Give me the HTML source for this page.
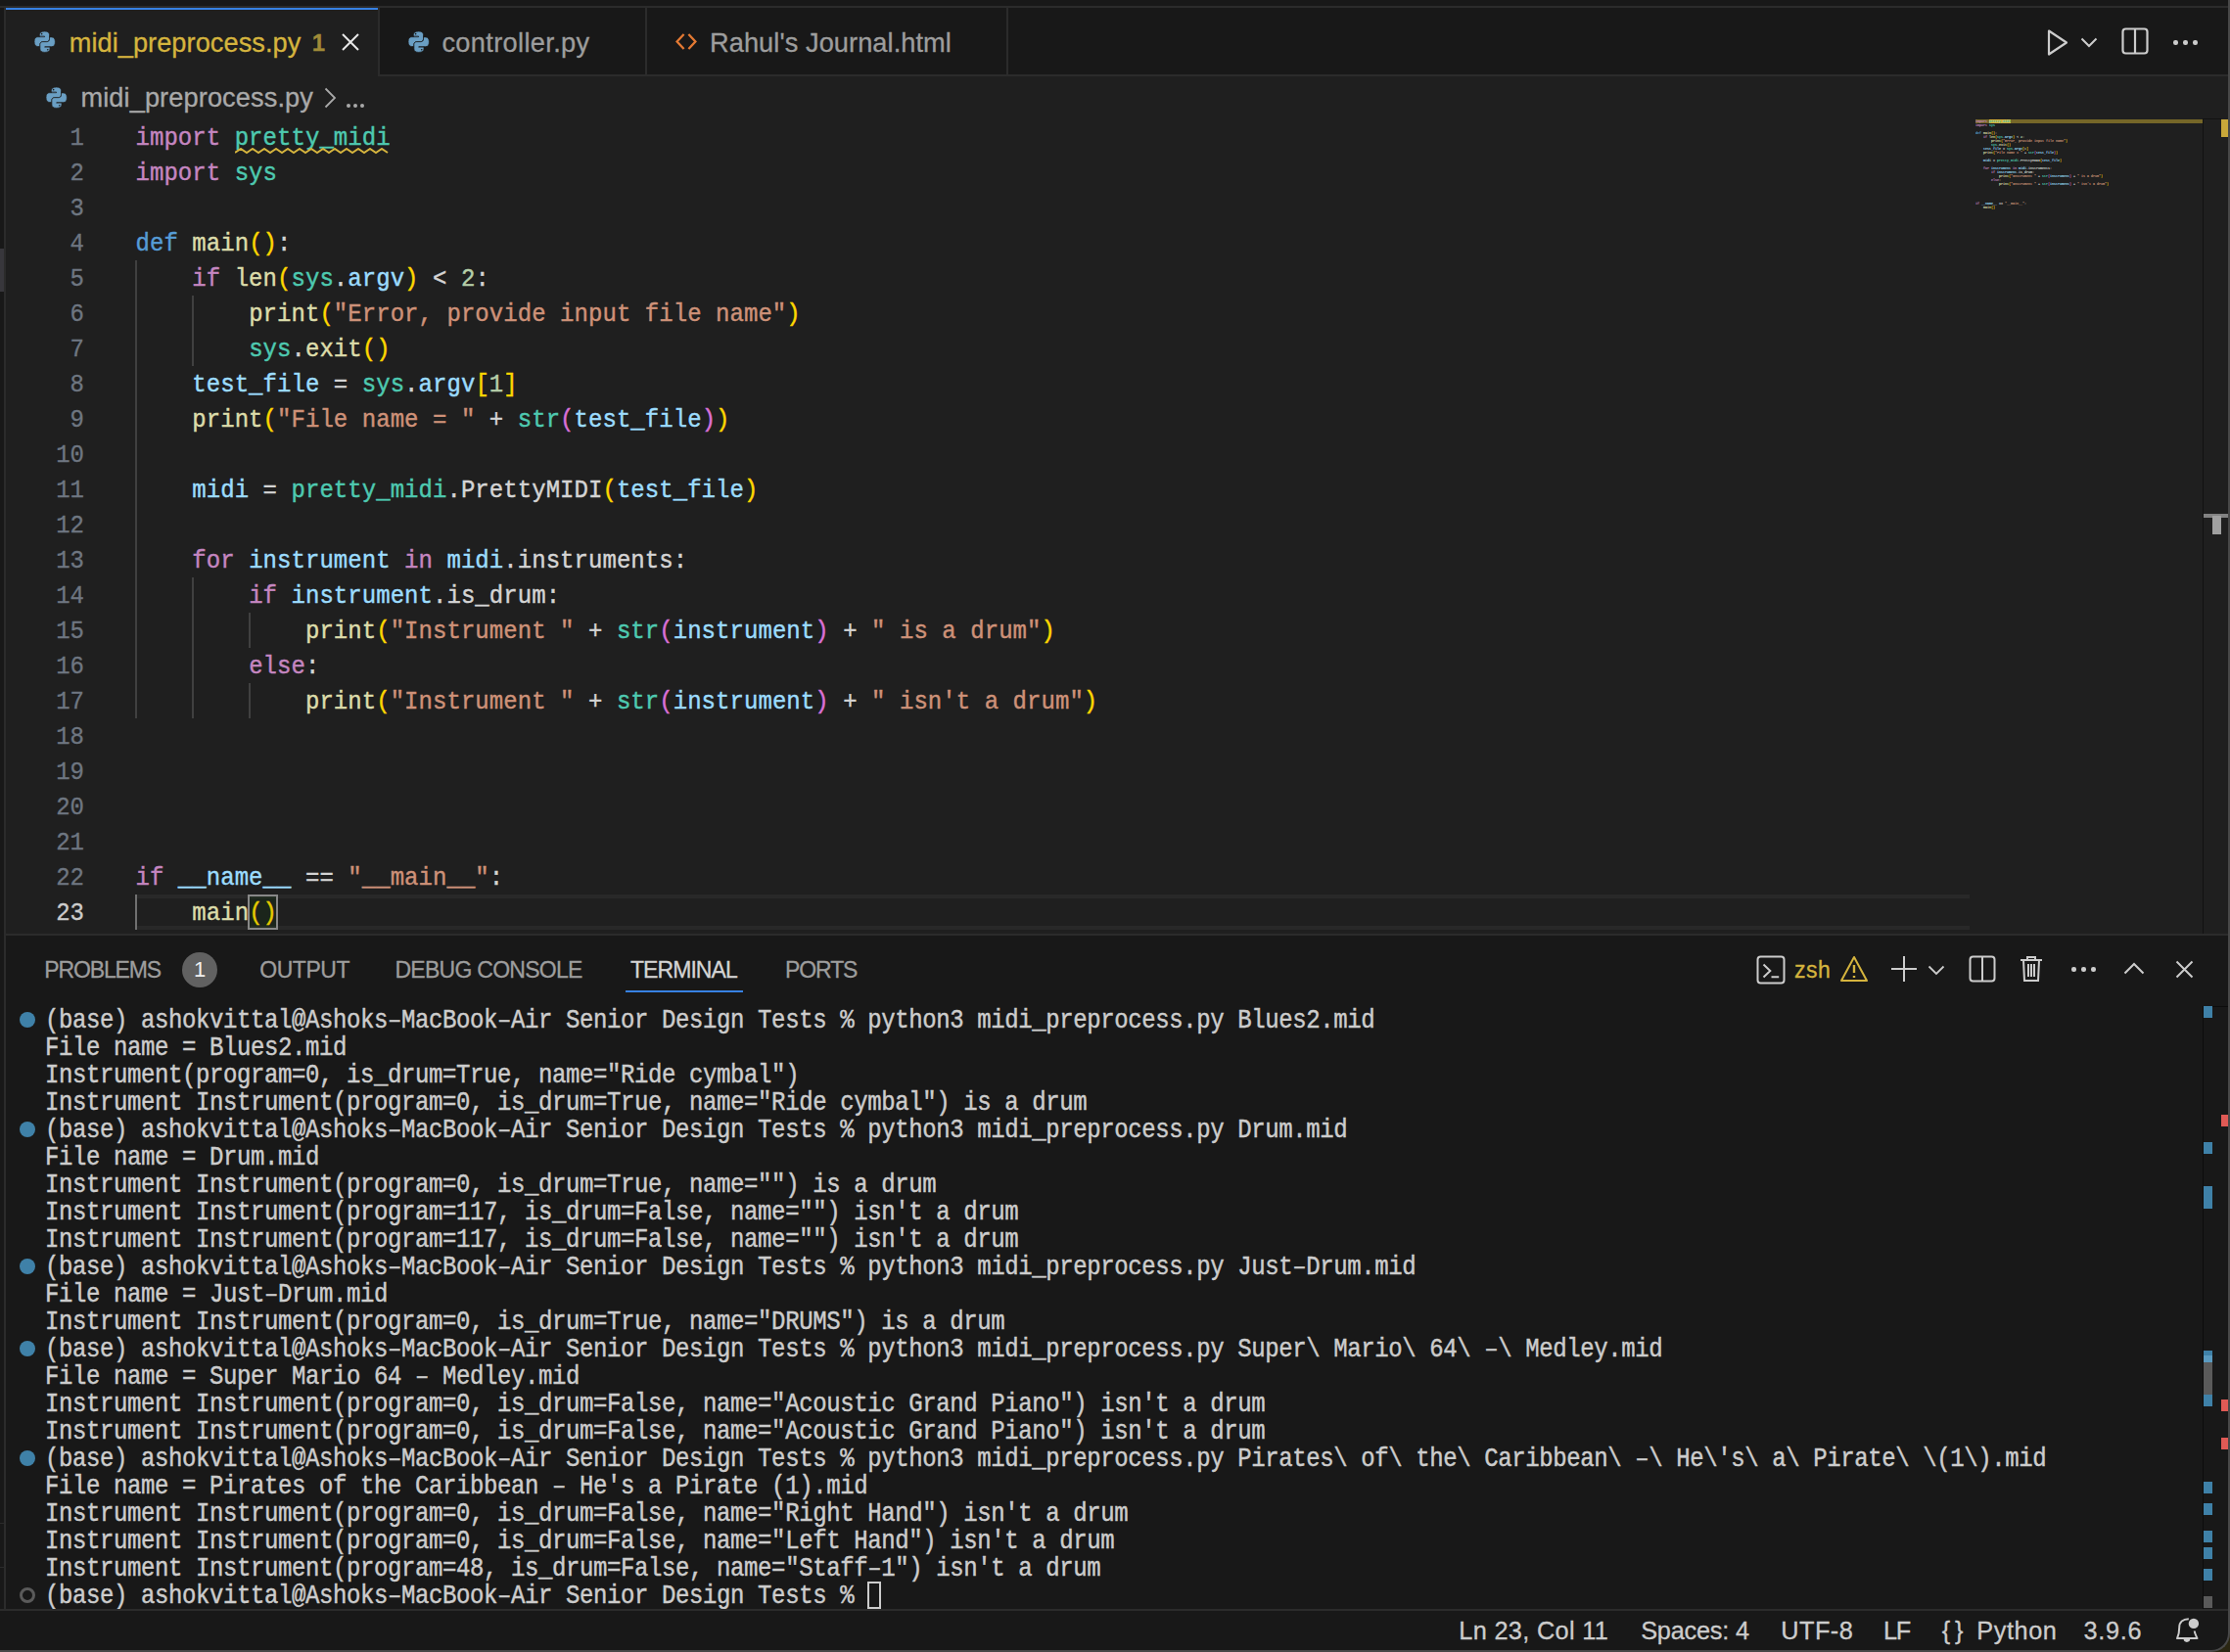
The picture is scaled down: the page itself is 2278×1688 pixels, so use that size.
<!DOCTYPE html><html><head><meta charset="utf-8"><style>
*{margin:0;padding:0;box-sizing:border-box}
html,body{width:2278px;height:1688px;overflow:hidden;background:#181818}
body{position:relative;font-family:"Liberation Sans",sans-serif}
.a{position:absolute}
.mono{font-family:"Liberation Mono",monospace;white-space:pre}
.cl{position:absolute;left:138.5px;height:36px;line-height:36px;transform:translateY(2px) scaleY(1.11);transform-origin:0 24px;-webkit-text-stroke:0.4px;font-size:24px;letter-spacing:0.050px;font-family:"Liberation Mono",monospace;white-space:pre}
.ln{position:absolute;left:0;width:86px;text-align:right;height:36px;line-height:36px;transform:translateY(2px) scaleY(1.11);transform-origin:0 24px;-webkit-text-stroke:0.3px;font-size:24px;font-family:"Liberation Mono",monospace;color:#6e7681}
.tl{position:absolute;left:46px;height:28px;line-height:28px;transform:translateY(2.5px) scaleY(1.12);transform-origin:0 20px;-webkit-text-stroke:0.4px;font-size:24px;letter-spacing:-0.400px;font-family:"Liberation Mono",monospace;white-space:pre;color:#cccccc}
.ui{font-family:"Liberation Sans",sans-serif;white-space:pre;-webkit-text-stroke:0.3px}
</style></head><body>
<div class="a" style="left:0;top:0;width:2278px;height:6px;background:#181818"></div>
<div class="a" style="left:0;top:6px;width:2278px;height:2px;background:#2b2b2b"></div>
<div class="a" style="left:6px;top:8px;width:2270px;height:68px;background:#181818"></div>
<div class="a" style="left:6px;top:76px;width:2270px;height:2px;background:#2b2b2b"></div>
<div class="a" style="left:6px;top:78px;width:2270px;height:876px;background:#1f1f1f"></div>
<div class="a" style="left:6px;top:8px;width:380px;height:70px;background:#1f1f1f"></div>
<div class="a" style="left:6px;top:8px;width:380px;height:2px;background:#3781e3"></div>
<div class="a" style="left:386px;top:8px;width:2px;height:68px;background:#2b2b2b"></div>
<div class="a" style="left:659px;top:8px;width:2px;height:68px;background:#2b2b2b"></div>
<div class="a" style="left:1028px;top:8px;width:2px;height:68px;background:#2b2b2b"></div>
<div class="a" style="left:0;top:8px;width:4px;height:1636px;background:#181818"></div>
<div class="a" style="left:4px;top:8px;width:2px;height:1636px;background:#2b2b2b"></div>
<div class="a" style="left:0;top:254px;width:4px;height:44px;background:#38373c"></div>
<div class="a" style="left:0;top:1556px;width:4px;height:1px;background:#2b2b2b"></div>
<div class="a" style="left:0;top:1601px;width:4px;height:1px;background:#2b2b2b"></div>
<svg class="a" style="left:34.8px;top:31.8px;overflow:visible" width="21.4" height="21.4" viewBox="0 0 16 16"><path fill="#6a9fc4" stroke="#1f1f1f" stroke-width="0.55" d="M4 2.6C4 1 5.3 0 8 0C10.4 0 11.6 1 11.6 2.6V5.9C11.6 7.2 10.8 8 9.5 8H6.5C5.2 8 4.4 8.8 4.4 10.1V11.6H2.7C1 11.6 0 10.3 0 7.9C0 5.4 1 4.3 2.7 4.3H7.9V3.8H4Z"/><path fill="#6a9fc4" stroke="#1f1f1f" stroke-width="0.55" d="M4 2.6C4 1 5.3 0 8 0C10.4 0 11.6 1 11.6 2.6V5.9C11.6 7.2 10.8 8 9.5 8H6.5C5.2 8 4.4 8.8 4.4 10.1V11.6H2.7C1 11.6 0 10.3 0 7.9C0 5.4 1 4.3 2.7 4.3H7.9V3.8H4Z" transform="rotate(180 8 8)"/><rect x="4.4" y="3.5" width="3.3" height="0.6" fill="#4f6f88"/><rect x="8.3" y="11.9" width="3.3" height="0.6" fill="#4f6f88"/><circle cx="5.7" cy="2.0" r="0.6" fill="#1f1f1f"/><circle cx="10.3" cy="14.0" r="0.6" fill="#1f1f1f"/></svg>
<div class="a ui" style="left:70.70px;top:29.99px;font-size:27.2px;line-height:27.2px;letter-spacing:0.053px;color:#d5b43e;">midi_preprocess.py</div>
<div class="a ui" style="left:318.80px;top:31.70px;font-size:24px;line-height:24px;letter-spacing:0.000px;color:#a08b38;font-weight:bold;">1</div>
<svg class="a" style="left:349px;top:34px" width="18" height="18" viewBox="0 0 18 18"><path d="M1 1L17 17M17 1L1 17" stroke="#e8e8e8" stroke-width="2"/></svg>
<svg class="a" style="left:416.8px;top:31.8px;overflow:visible" width="21.4" height="21.4" viewBox="0 0 16 16"><path fill="#6a9fc4" stroke="#181818" stroke-width="0.55" d="M4 2.6C4 1 5.3 0 8 0C10.4 0 11.6 1 11.6 2.6V5.9C11.6 7.2 10.8 8 9.5 8H6.5C5.2 8 4.4 8.8 4.4 10.1V11.6H2.7C1 11.6 0 10.3 0 7.9C0 5.4 1 4.3 2.7 4.3H7.9V3.8H4Z"/><path fill="#6a9fc4" stroke="#181818" stroke-width="0.55" d="M4 2.6C4 1 5.3 0 8 0C10.4 0 11.6 1 11.6 2.6V5.9C11.6 7.2 10.8 8 9.5 8H6.5C5.2 8 4.4 8.8 4.4 10.1V11.6H2.7C1 11.6 0 10.3 0 7.9C0 5.4 1 4.3 2.7 4.3H7.9V3.8H4Z" transform="rotate(180 8 8)"/><rect x="4.4" y="3.5" width="3.3" height="0.6" fill="#4f6f88"/><rect x="8.3" y="11.9" width="3.3" height="0.6" fill="#4f6f88"/><circle cx="5.7" cy="2.0" r="0.6" fill="#181818"/><circle cx="10.3" cy="14.0" r="0.6" fill="#181818"/></svg>
<div class="a ui" style="left:451.40px;top:29.99px;font-size:27.2px;line-height:27.2px;letter-spacing:0.350px;color:#9d9d9d;">controller.py</div>
<svg class="a" style="left:690px;top:34px" width="22" height="17" viewBox="0 0 22 17"><path d="M8.6 1L1.6 8.5L8.6 16M13.4 1L20.4 8.5L13.4 16" stroke="#e37933" stroke-width="2.3" fill="none"/></svg>
<div class="a ui" style="left:725.00px;top:29.99px;font-size:27.2px;line-height:27.2px;letter-spacing:0.074px;color:#9d9d9d;">Rahul&#x27;s Journal.html</div>
<svg class="a" style="left:2090px;top:29px" width="24" height="29" viewBox="0 0 24 29"><path d="M3 2.5L21 14.5L3 26.5Z" stroke="#cccccc" stroke-width="2.2" fill="none" stroke-linejoin="round"/></svg>
<svg class="a" style="left:2125px;top:38px" width="18" height="11" viewBox="0 0 18 11"><path d="M1.5 1.5L9 9L16.5 1.5" stroke="#cccccc" stroke-width="2" fill="none"/></svg>
<svg class="a" style="left:2167px;top:28px" width="28" height="28" viewBox="0 0 28 28"><rect x="1.5" y="1.5" width="25" height="25" rx="3" stroke="#cccccc" stroke-width="2.2" fill="none"/><path d="M14 2V26" stroke="#cccccc" stroke-width="2.2"/></svg>
<div class="a" style="left:2220px;top:41px;width:4.5px;height:4.5px;border-radius:50%;background:#cccccc"></div>
<div class="a" style="left:2230px;top:41px;width:4.5px;height:4.5px;border-radius:50%;background:#cccccc"></div>
<div class="a" style="left:2240px;top:41px;width:4.5px;height:4.5px;border-radius:50%;background:#cccccc"></div>
<svg class="a" style="left:46.8px;top:89px;overflow:visible" width="21.4" height="21.4" viewBox="0 0 16 16"><path fill="#6a9fc4" stroke="#1f1f1f" stroke-width="0.55" d="M4 2.6C4 1 5.3 0 8 0C10.4 0 11.6 1 11.6 2.6V5.9C11.6 7.2 10.8 8 9.5 8H6.5C5.2 8 4.4 8.8 4.4 10.1V11.6H2.7C1 11.6 0 10.3 0 7.9C0 5.4 1 4.3 2.7 4.3H7.9V3.8H4Z"/><path fill="#6a9fc4" stroke="#1f1f1f" stroke-width="0.55" d="M4 2.6C4 1 5.3 0 8 0C10.4 0 11.6 1 11.6 2.6V5.9C11.6 7.2 10.8 8 9.5 8H6.5C5.2 8 4.4 8.8 4.4 10.1V11.6H2.7C1 11.6 0 10.3 0 7.9C0 5.4 1 4.3 2.7 4.3H7.9V3.8H4Z" transform="rotate(180 8 8)"/><rect x="4.4" y="3.5" width="3.3" height="0.6" fill="#4f6f88"/><rect x="8.3" y="11.9" width="3.3" height="0.6" fill="#4f6f88"/><circle cx="5.7" cy="2.0" r="0.6" fill="#1f1f1f"/><circle cx="10.3" cy="14.0" r="0.6" fill="#1f1f1f"/></svg>
<div class="a ui" style="left:82.40px;top:86.39px;font-size:27.2px;line-height:27.2px;letter-spacing:0.106px;color:#a9a9a9;">midi_preprocess.py</div>
<svg class="a" style="left:331px;top:89px" width="13" height="22" viewBox="0 0 13 22"><path d="M1.5 1.5L11 11L1.5 20.5" stroke="#a9a9a9" stroke-width="1.8" fill="none"/></svg>
<div class="a" style="left:354.3px;top:105.8px;width:4px;height:4px;border-radius:50%;background:#a9a9a9"></div>
<div class="a" style="left:360.9px;top:105.8px;width:4px;height:4px;border-radius:50%;background:#a9a9a9"></div>
<div class="a" style="left:367.5px;top:105.8px;width:4px;height:4px;border-radius:50%;background:#a9a9a9"></div>
<div class="a" style="left:140px;top:914px;width:1872px;height:36px;border-top:4px solid #282828;border-bottom:4px solid #282828"></div>
<div class="a" style="left:138px;top:266px;width:2px;height:468px;background:#404040"></div>
<div class="a" style="left:196px;top:302px;width:2px;height:72px;background:#404040"></div>
<div class="a" style="left:196px;top:590px;width:2px;height:144px;background:#404040"></div>
<div class="a" style="left:254px;top:626px;width:2px;height:36px;background:#404040"></div>
<div class="a" style="left:254px;top:698px;width:2px;height:36px;background:#404040"></div>
<div class="a" style="left:138px;top:914px;width:2px;height:36px;background:#707070"></div>
<div class="ln" style="top:122px;color:#6e7681">1</div>
<div class="cl" style="top:122px"><span style="color:#c586c0">import</span><span style="color:#d4d4d4"> </span><span style="color:#4ec9b0">pretty_midi</span></div>
<div class="ln" style="top:158px;color:#6e7681">2</div>
<div class="cl" style="top:158px"><span style="color:#c586c0">import</span><span style="color:#d4d4d4"> </span><span style="color:#4ec9b0">sys</span></div>
<div class="ln" style="top:194px;color:#6e7681">3</div>
<div class="ln" style="top:230px;color:#6e7681">4</div>
<div class="cl" style="top:230px"><span style="color:#569cd6">def</span><span style="color:#d4d4d4"> </span><span style="color:#dcdcaa">main</span><span style="color:#ffd700">(</span><span style="color:#ffd700">)</span><span style="color:#d4d4d4">:</span></div>
<div class="ln" style="top:266px;color:#6e7681">5</div>
<div class="cl" style="top:266px"><span style="color:#d4d4d4">    </span><span style="color:#c586c0">if</span><span style="color:#d4d4d4"> </span><span style="color:#dcdcaa">len</span><span style="color:#ffd700">(</span><span style="color:#4ec9b0">sys</span><span style="color:#d4d4d4">.</span><span style="color:#9cdcfe">argv</span><span style="color:#ffd700">)</span><span style="color:#d4d4d4"> &lt; </span><span style="color:#b5cea8">2</span><span style="color:#d4d4d4">:</span></div>
<div class="ln" style="top:302px;color:#6e7681">6</div>
<div class="cl" style="top:302px"><span style="color:#d4d4d4">        </span><span style="color:#dcdcaa">print</span><span style="color:#ffd700">(</span><span style="color:#ce9178">&quot;Error, provide input file name&quot;</span><span style="color:#ffd700">)</span></div>
<div class="ln" style="top:338px;color:#6e7681">7</div>
<div class="cl" style="top:338px"><span style="color:#d4d4d4">        </span><span style="color:#4ec9b0">sys</span><span style="color:#d4d4d4">.</span><span style="color:#dcdcaa">exit</span><span style="color:#ffd700">(</span><span style="color:#ffd700">)</span></div>
<div class="ln" style="top:374px;color:#6e7681">8</div>
<div class="cl" style="top:374px"><span style="color:#d4d4d4">    </span><span style="color:#9cdcfe">test_file</span><span style="color:#d4d4d4"> = </span><span style="color:#4ec9b0">sys</span><span style="color:#d4d4d4">.</span><span style="color:#9cdcfe">argv</span><span style="color:#ffd700">[</span><span style="color:#b5cea8">1</span><span style="color:#ffd700">]</span></div>
<div class="ln" style="top:410px;color:#6e7681">9</div>
<div class="cl" style="top:410px"><span style="color:#d4d4d4">    </span><span style="color:#dcdcaa">print</span><span style="color:#ffd700">(</span><span style="color:#ce9178">&quot;File name = &quot;</span><span style="color:#d4d4d4"> + </span><span style="color:#4ec9b0">str</span><span style="color:#da70d6">(</span><span style="color:#9cdcfe">test_file</span><span style="color:#da70d6">)</span><span style="color:#ffd700">)</span></div>
<div class="ln" style="top:446px;color:#6e7681">10</div>
<div class="ln" style="top:482px;color:#6e7681">11</div>
<div class="cl" style="top:482px"><span style="color:#d4d4d4">    </span><span style="color:#9cdcfe">midi</span><span style="color:#d4d4d4"> = </span><span style="color:#4ec9b0">pretty_midi</span><span style="color:#d4d4d4">.</span><span style="color:#d4d4d4">PrettyMIDI</span><span style="color:#ffd700">(</span><span style="color:#9cdcfe">test_file</span><span style="color:#ffd700">)</span></div>
<div class="ln" style="top:518px;color:#6e7681">12</div>
<div class="ln" style="top:554px;color:#6e7681">13</div>
<div class="cl" style="top:554px"><span style="color:#d4d4d4">    </span><span style="color:#c586c0">for</span><span style="color:#d4d4d4"> </span><span style="color:#9cdcfe">instrument</span><span style="color:#d4d4d4"> </span><span style="color:#c586c0">in</span><span style="color:#d4d4d4"> </span><span style="color:#9cdcfe">midi</span><span style="color:#d4d4d4">.instruments:</span></div>
<div class="ln" style="top:590px;color:#6e7681">14</div>
<div class="cl" style="top:590px"><span style="color:#d4d4d4">        </span><span style="color:#c586c0">if</span><span style="color:#d4d4d4"> </span><span style="color:#9cdcfe">instrument</span><span style="color:#d4d4d4">.is_drum:</span></div>
<div class="ln" style="top:626px;color:#6e7681">15</div>
<div class="cl" style="top:626px"><span style="color:#d4d4d4">            </span><span style="color:#dcdcaa">print</span><span style="color:#ffd700">(</span><span style="color:#ce9178">&quot;Instrument &quot;</span><span style="color:#d4d4d4"> + </span><span style="color:#4ec9b0">str</span><span style="color:#da70d6">(</span><span style="color:#9cdcfe">instrument</span><span style="color:#da70d6">)</span><span style="color:#d4d4d4"> + </span><span style="color:#ce9178">&quot; is a drum&quot;</span><span style="color:#ffd700">)</span></div>
<div class="ln" style="top:662px;color:#6e7681">16</div>
<div class="cl" style="top:662px"><span style="color:#d4d4d4">        </span><span style="color:#c586c0">else</span><span style="color:#d4d4d4">:</span></div>
<div class="ln" style="top:698px;color:#6e7681">17</div>
<div class="cl" style="top:698px"><span style="color:#d4d4d4">            </span><span style="color:#dcdcaa">print</span><span style="color:#ffd700">(</span><span style="color:#ce9178">&quot;Instrument &quot;</span><span style="color:#d4d4d4"> + </span><span style="color:#4ec9b0">str</span><span style="color:#da70d6">(</span><span style="color:#9cdcfe">instrument</span><span style="color:#da70d6">)</span><span style="color:#d4d4d4"> + </span><span style="color:#ce9178">&quot; isn&#x27;t a drum&quot;</span><span style="color:#ffd700">)</span></div>
<div class="ln" style="top:734px;color:#6e7681">18</div>
<div class="ln" style="top:770px;color:#6e7681">19</div>
<div class="ln" style="top:806px;color:#6e7681">20</div>
<div class="ln" style="top:842px;color:#6e7681">21</div>
<div class="ln" style="top:878px;color:#6e7681">22</div>
<div class="cl" style="top:878px"><span style="color:#c586c0">if</span><span style="color:#d4d4d4"> </span><span style="color:#9cdcfe">__name__</span><span style="color:#d4d4d4"> == </span><span style="color:#ce9178">&quot;__main__&quot;</span><span style="color:#d4d4d4">:</span></div>
<div class="ln" style="top:914px;color:#cccccc">23</div>
<div class="cl" style="top:914px"><span style="color:#d4d4d4">    </span><span style="color:#dcdcaa">main</span><span style="color:#ffd700">(</span><span style="color:#ffd700">)</span></div>
<svg class="a" style="left:239.6px;top:151px" width="158.9" height="7" viewBox="0 0 158.9 7"><path d="M0 5 L6.0 1 L12.0 5 L18.0 1 L24.0 5 L30.0 1 L36.0 5 L42.0 1 L48.0 5 L54.0 1 L60.0 5 L66.0 1 L72.0 5 L78.0 1 L84.0 5 L90.0 1 L96.0 5 L102.0 1 L108.0 5 L114.0 1 L120.0 5 L126.0 1 L132.0 5 L138.0 1 L144.0 5 L150.0 1 L156.0 5" stroke="#d5b43e" stroke-width="2" fill="none"/></svg>
<div class="a" style="left:253.1px;top:914px;width:30.9px;height:36px;border:2px solid #888888;background:rgba(0,100,0,0.1)"></div>
<div class="a" style="left:2018px;top:122px;width:232px;height:4px;background:#756628"></div>
<div class="a" style="left:2032px;top:122px;width:22px;height:4px;background:#d4b03a"></div>
<div class="a mono" style="left:2018px;top:122px;height:4px;line-height:4px;font-size:3.333px;font-weight:bold;transform:scaleY(1.3);transform-origin:0 2px"><span style="color:#c586c0">import</span><span style="color:#d4d4d4"> </span><span style="color:#4ec9b0">pretty_midi</span></div>
<div class="a mono" style="left:2018px;top:126px;height:4px;line-height:4px;font-size:3.333px;font-weight:bold;transform:scaleY(1.3);transform-origin:0 2px"><span style="color:#c586c0">import</span><span style="color:#d4d4d4"> </span><span style="color:#4ec9b0">sys</span></div>
<div class="a mono" style="left:2018px;top:134px;height:4px;line-height:4px;font-size:3.333px;font-weight:bold;transform:scaleY(1.3);transform-origin:0 2px"><span style="color:#569cd6">def</span><span style="color:#d4d4d4"> </span><span style="color:#dcdcaa">main</span><span style="color:#ffd700">(</span><span style="color:#ffd700">)</span><span style="color:#d4d4d4">:</span></div>
<div class="a mono" style="left:2018px;top:138px;height:4px;line-height:4px;font-size:3.333px;font-weight:bold;transform:scaleY(1.3);transform-origin:0 2px"><span style="color:#d4d4d4">    </span><span style="color:#c586c0">if</span><span style="color:#d4d4d4"> </span><span style="color:#dcdcaa">len</span><span style="color:#ffd700">(</span><span style="color:#4ec9b0">sys</span><span style="color:#d4d4d4">.</span><span style="color:#9cdcfe">argv</span><span style="color:#ffd700">)</span><span style="color:#d4d4d4"> &lt; </span><span style="color:#b5cea8">2</span><span style="color:#d4d4d4">:</span></div>
<div class="a mono" style="left:2018px;top:142px;height:4px;line-height:4px;font-size:3.333px;font-weight:bold;transform:scaleY(1.3);transform-origin:0 2px"><span style="color:#d4d4d4">        </span><span style="color:#dcdcaa">print</span><span style="color:#ffd700">(</span><span style="color:#ce9178">&quot;Error, provide input file name&quot;</span><span style="color:#ffd700">)</span></div>
<div class="a mono" style="left:2018px;top:146px;height:4px;line-height:4px;font-size:3.333px;font-weight:bold;transform:scaleY(1.3);transform-origin:0 2px"><span style="color:#d4d4d4">        </span><span style="color:#4ec9b0">sys</span><span style="color:#d4d4d4">.</span><span style="color:#dcdcaa">exit</span><span style="color:#ffd700">(</span><span style="color:#ffd700">)</span></div>
<div class="a mono" style="left:2018px;top:150px;height:4px;line-height:4px;font-size:3.333px;font-weight:bold;transform:scaleY(1.3);transform-origin:0 2px"><span style="color:#d4d4d4">    </span><span style="color:#9cdcfe">test_file</span><span style="color:#d4d4d4"> = </span><span style="color:#4ec9b0">sys</span><span style="color:#d4d4d4">.</span><span style="color:#9cdcfe">argv</span><span style="color:#ffd700">[</span><span style="color:#b5cea8">1</span><span style="color:#ffd700">]</span></div>
<div class="a mono" style="left:2018px;top:154px;height:4px;line-height:4px;font-size:3.333px;font-weight:bold;transform:scaleY(1.3);transform-origin:0 2px"><span style="color:#d4d4d4">    </span><span style="color:#dcdcaa">print</span><span style="color:#ffd700">(</span><span style="color:#ce9178">&quot;File name = &quot;</span><span style="color:#d4d4d4"> + </span><span style="color:#4ec9b0">str</span><span style="color:#da70d6">(</span><span style="color:#9cdcfe">test_file</span><span style="color:#da70d6">)</span><span style="color:#ffd700">)</span></div>
<div class="a mono" style="left:2018px;top:162px;height:4px;line-height:4px;font-size:3.333px;font-weight:bold;transform:scaleY(1.3);transform-origin:0 2px"><span style="color:#d4d4d4">    </span><span style="color:#9cdcfe">midi</span><span style="color:#d4d4d4"> = </span><span style="color:#4ec9b0">pretty_midi</span><span style="color:#d4d4d4">.</span><span style="color:#d4d4d4">PrettyMIDI</span><span style="color:#ffd700">(</span><span style="color:#9cdcfe">test_file</span><span style="color:#ffd700">)</span></div>
<div class="a mono" style="left:2018px;top:170px;height:4px;line-height:4px;font-size:3.333px;font-weight:bold;transform:scaleY(1.3);transform-origin:0 2px"><span style="color:#d4d4d4">    </span><span style="color:#c586c0">for</span><span style="color:#d4d4d4"> </span><span style="color:#9cdcfe">instrument</span><span style="color:#d4d4d4"> </span><span style="color:#c586c0">in</span><span style="color:#d4d4d4"> </span><span style="color:#9cdcfe">midi</span><span style="color:#d4d4d4">.instruments:</span></div>
<div class="a mono" style="left:2018px;top:174px;height:4px;line-height:4px;font-size:3.333px;font-weight:bold;transform:scaleY(1.3);transform-origin:0 2px"><span style="color:#d4d4d4">        </span><span style="color:#c586c0">if</span><span style="color:#d4d4d4"> </span><span style="color:#9cdcfe">instrument</span><span style="color:#d4d4d4">.is_drum:</span></div>
<div class="a mono" style="left:2018px;top:178px;height:4px;line-height:4px;font-size:3.333px;font-weight:bold;transform:scaleY(1.3);transform-origin:0 2px"><span style="color:#d4d4d4">            </span><span style="color:#dcdcaa">print</span><span style="color:#ffd700">(</span><span style="color:#ce9178">&quot;Instrument &quot;</span><span style="color:#d4d4d4"> + </span><span style="color:#4ec9b0">str</span><span style="color:#da70d6">(</span><span style="color:#9cdcfe">instrument</span><span style="color:#da70d6">)</span><span style="color:#d4d4d4"> + </span><span style="color:#ce9178">&quot; is a drum&quot;</span><span style="color:#ffd700">)</span></div>
<div class="a mono" style="left:2018px;top:182px;height:4px;line-height:4px;font-size:3.333px;font-weight:bold;transform:scaleY(1.3);transform-origin:0 2px"><span style="color:#d4d4d4">        </span><span style="color:#c586c0">else</span><span style="color:#d4d4d4">:</span></div>
<div class="a mono" style="left:2018px;top:186px;height:4px;line-height:4px;font-size:3.333px;font-weight:bold;transform:scaleY(1.3);transform-origin:0 2px"><span style="color:#d4d4d4">            </span><span style="color:#dcdcaa">print</span><span style="color:#ffd700">(</span><span style="color:#ce9178">&quot;Instrument &quot;</span><span style="color:#d4d4d4"> + </span><span style="color:#4ec9b0">str</span><span style="color:#da70d6">(</span><span style="color:#9cdcfe">instrument</span><span style="color:#da70d6">)</span><span style="color:#d4d4d4"> + </span><span style="color:#ce9178">&quot; isn&#x27;t a drum&quot;</span><span style="color:#ffd700">)</span></div>
<div class="a mono" style="left:2018px;top:206px;height:4px;line-height:4px;font-size:3.333px;font-weight:bold;transform:scaleY(1.3);transform-origin:0 2px"><span style="color:#c586c0">if</span><span style="color:#d4d4d4"> </span><span style="color:#9cdcfe">__name__</span><span style="color:#d4d4d4"> == </span><span style="color:#ce9178">&quot;__main__&quot;</span><span style="color:#d4d4d4">:</span></div>
<div class="a mono" style="left:2018px;top:210px;height:4px;line-height:4px;font-size:3.333px;font-weight:bold;transform:scaleY(1.3);transform-origin:0 2px"><span style="color:#d4d4d4">    </span><span style="color:#dcdcaa">main</span><span style="color:#ffd700">(</span><span style="color:#ffd700">)</span></div>
<div class="a" style="left:2250px;top:122px;width:1px;height:832px;background:#121212"></div>
<div class="a" style="left:2250px;top:121px;width:19px;height:1px;background:#121212"></div>
<div class="a" style="left:2269px;top:122px;width:7px;height:18px;background:#c9a83a"></div>
<div class="a" style="left:2251px;top:525px;width:25px;height:4px;background:#828282"></div>
<div class="a" style="left:2260px;top:527px;width:9px;height:19px;background:#a0a0a0"></div>
<div class="a" style="left:6px;top:954px;width:2270px;height:2px;background:#2b2b2b"></div>
<div class="a" style="left:6px;top:956px;width:2270px;height:688px;background:#181818"></div>
<div class="a ui" style="left:45.20px;top:979.54px;font-size:23px;line-height:23px;letter-spacing:-1.114px;color:#9d9d9d;">PROBLEMS</div>
<div class="a ui" style="left:265.20px;top:979.54px;font-size:23px;line-height:23px;letter-spacing:-0.440px;color:#9d9d9d;">OUTPUT</div>
<div class="a ui" style="left:403.40px;top:979.54px;font-size:23px;line-height:23px;letter-spacing:-0.717px;color:#9d9d9d;">DEBUG CONSOLE</div>
<div class="a ui" style="left:644.00px;top:979.54px;font-size:23px;line-height:23px;letter-spacing:-0.943px;color:#d4d4d4;">TERMINAL</div>
<div class="a ui" style="left:802.00px;top:979.54px;font-size:23px;line-height:23px;letter-spacing:-1.100px;color:#9d9d9d;">PORTS</div>
<div class="a" style="left:186px;top:973px;width:36px;height:36px;border-radius:50%;background:#616161;color:#f0f0f0;font-size:22px;line-height:36px;text-align:center">1</div>
<div class="a" style="left:639px;top:1012px;width:120px;height:2px;background:#3781e3"></div>
<svg class="a" style="left:1794px;top:976px" width="30" height="30" viewBox="0 0 30 30"><rect x="1.5" y="1.5" width="27" height="27" rx="3" stroke="#cccccc" stroke-width="2" fill="none"/><path d="M7.5 9.5L14.3 16L7.5 22.5M15.5 22.3H23.2" stroke="#cccccc" stroke-width="2" fill="none"/></svg>
<div class="a ui" style="left:1833.10px;top:979.54px;font-size:23px;line-height:23px;letter-spacing:0.500px;color:#d5b43e;">zsh</div>
<svg class="a" style="left:1879px;top:976px" width="30" height="28" viewBox="0 0 30 28"><path d="M15 2L28 26H2Z" stroke="#d5b43e" stroke-width="2" fill="none" stroke-linejoin="round"/><path d="M15 10V18M15 21V23" stroke="#d5b43e" stroke-width="2.4"/></svg>
<svg class="a" style="left:1931px;top:976px" width="28" height="28" viewBox="0 0 28 28"><path d="M14 1V27M1 14H27" stroke="#cccccc" stroke-width="2"/></svg>
<svg class="a" style="left:1969px;top:986px" width="18" height="11" viewBox="0 0 18 11"><path d="M1.5 1.5L9 9L16.5 1.5" stroke="#cccccc" stroke-width="1.8" fill="none"/></svg>
<svg class="a" style="left:2011px;top:976px" width="28" height="28" viewBox="0 0 28 28"><rect x="1.5" y="1.5" width="25" height="25" rx="3" stroke="#cccccc" stroke-width="2" fill="none"/><path d="M14 2V26" stroke="#cccccc" stroke-width="2"/></svg>
<svg class="a" style="left:2063px;top:976px" width="24" height="28" viewBox="0 0 24 28"><path d="M1 5H23M8 5V2H16V5M4 5L5 26H19L20 5M9 9V22M12 9V22M15 9V22" stroke="#cccccc" stroke-width="2" fill="none"/></svg>
<div class="a" style="left:2116px;top:988px;width:4.5px;height:4.5px;border-radius:50%;background:#cccccc"></div>
<div class="a" style="left:2126px;top:988px;width:4.5px;height:4.5px;border-radius:50%;background:#cccccc"></div>
<div class="a" style="left:2136px;top:988px;width:4.5px;height:4.5px;border-radius:50%;background:#cccccc"></div>
<svg class="a" style="left:2169px;top:983px" width="22" height="13" viewBox="0 0 22 13"><path d="M1.5 11.5L11 2L20.5 11.5" stroke="#cccccc" stroke-width="2" fill="none"/></svg>
<svg class="a" style="left:2222px;top:981px" width="19" height="19" viewBox="0 0 19 19"><path d="M1.5 1.5L17.5 17.5M17.5 1.5L1.5 17.5" stroke="#cccccc" stroke-width="2" fill="none"/></svg>
<div class="a" style="left:20px;top:1034px;width:16px;height:16px;border-radius:50%;background:#3f81a8"></div>
<div class="tl" style="top:1028px">(base) ashokvittal@Ashoks&#8211;MacBook&#8211;Air Senior Design Tests % python3 midi_preprocess.py Blues2.mid</div>
<div class="tl" style="top:1056px">File name = Blues2.mid</div>
<div class="tl" style="top:1084px">Instrument(program=0, is_drum=True, name=&quot;Ride cymbal&quot;)</div>
<div class="tl" style="top:1112px">Instrument Instrument(program=0, is_drum=True, name=&quot;Ride cymbal&quot;) is a drum</div>
<div class="a" style="left:20px;top:1146px;width:16px;height:16px;border-radius:50%;background:#3f81a8"></div>
<div class="tl" style="top:1140px">(base) ashokvittal@Ashoks&#8211;MacBook&#8211;Air Senior Design Tests % python3 midi_preprocess.py Drum.mid</div>
<div class="tl" style="top:1168px">File name = Drum.mid</div>
<div class="tl" style="top:1196px">Instrument Instrument(program=0, is_drum=True, name=&quot;&quot;) is a drum</div>
<div class="tl" style="top:1224px">Instrument Instrument(program=117, is_drum=False, name=&quot;&quot;) isn&#x27;t a drum</div>
<div class="tl" style="top:1252px">Instrument Instrument(program=117, is_drum=False, name=&quot;&quot;) isn&#x27;t a drum</div>
<div class="a" style="left:20px;top:1286px;width:16px;height:16px;border-radius:50%;background:#3f81a8"></div>
<div class="tl" style="top:1280px">(base) ashokvittal@Ashoks&#8211;MacBook&#8211;Air Senior Design Tests % python3 midi_preprocess.py Just&#8211;Drum.mid</div>
<div class="tl" style="top:1308px">File name = Just&#8211;Drum.mid</div>
<div class="tl" style="top:1336px">Instrument Instrument(program=0, is_drum=True, name=&quot;DRUMS&quot;) is a drum</div>
<div class="a" style="left:20px;top:1370px;width:16px;height:16px;border-radius:50%;background:#3f81a8"></div>
<div class="tl" style="top:1364px">(base) ashokvittal@Ashoks&#8211;MacBook&#8211;Air Senior Design Tests % python3 midi_preprocess.py Super\ Mario\ 64\ &#8211;\ Medley.mid</div>
<div class="tl" style="top:1392px">File name = Super Mario 64 &#8211; Medley.mid</div>
<div class="tl" style="top:1420px">Instrument Instrument(program=0, is_drum=False, name=&quot;Acoustic Grand Piano&quot;) isn&#x27;t a drum</div>
<div class="tl" style="top:1448px">Instrument Instrument(program=0, is_drum=False, name=&quot;Acoustic Grand Piano&quot;) isn&#x27;t a drum</div>
<div class="a" style="left:20px;top:1482px;width:16px;height:16px;border-radius:50%;background:#3f81a8"></div>
<div class="tl" style="top:1476px">(base) ashokvittal@Ashoks&#8211;MacBook&#8211;Air Senior Design Tests % python3 midi_preprocess.py Pirates\ of\ the\ Caribbean\ &#8211;\ He\&#x27;s\ a\ Pirate\ \(1\).mid</div>
<div class="tl" style="top:1504px">File name = Pirates of the Caribbean &#8211; He&#x27;s a Pirate (1).mid</div>
<div class="tl" style="top:1532px">Instrument Instrument(program=0, is_drum=False, name=&quot;Right Hand&quot;) isn&#x27;t a drum</div>
<div class="tl" style="top:1560px">Instrument Instrument(program=0, is_drum=False, name=&quot;Left Hand&quot;) isn&#x27;t a drum</div>
<div class="tl" style="top:1588px">Instrument Instrument(program=48, is_drum=False, name=&quot;Staff&#8211;1&quot;) isn&#x27;t a drum</div>
<div class="a" style="left:20px;top:1622px;width:16px;height:16px;border-radius:50%;border:3px solid #5a5a5a"></div>
<div class="tl" style="top:1616px">(base) ashokvittal@Ashoks&#8211;MacBook&#8211;Air Senior Design Tests % </div>
<div class="a" style="left:886.0px;top:1616px;width:14.0px;height:28px;border:2px solid #cccccc"></div>
<div class="a" style="left:2250px;top:1028px;width:1px;height:616px;background:#0c0c0c"></div>
<div class="a" style="left:2250px;top:1028px;width:26px;height:1px;background:#0c0c0c"></div>
<div class="a" style="left:2251px;top:1028px;width:9px;height:12px;background:#3f81a8"></div>
<div class="a" style="left:2251px;top:1167px;width:9px;height:12px;background:#3f81a8"></div>
<div class="a" style="left:2251px;top:1212px;width:9px;height:23px;background:#3f81a8"></div>
<div class="a" style="left:2251px;top:1380px;width:9px;height:12px;background:#3f81a8"></div>
<div class="a" style="left:2251px;top:1424px;width:9px;height:13px;background:#3f81a8"></div>
<div class="a" style="left:2251px;top:1514px;width:9px;height:12px;background:#3f81a8"></div>
<div class="a" style="left:2251px;top:1536px;width:9px;height:12px;background:#3f81a8"></div>
<div class="a" style="left:2251px;top:1564px;width:9px;height:12px;background:#3f81a8"></div>
<div class="a" style="left:2251px;top:1581px;width:9px;height:12px;background:#3f81a8"></div>
<div class="a" style="left:2251px;top:1603px;width:9px;height:12px;background:#3f81a8"></div>
<div class="a" style="left:2251px;top:1385px;width:9px;height:40px;background:#5a5a5a"></div>
<div class="a" style="left:2251px;top:1385px;width:9px;height:7px;background:#5a9ac0"></div>
<div class="a" style="left:2251px;top:1631px;width:9px;height:12px;background:#5a5a5a"></div>
<div class="a" style="left:2269px;top:1139px;width:7px;height:12px;background:#e05a55"></div>
<div class="a" style="left:2269px;top:1430px;width:7px;height:12px;background:#e05a55"></div>
<div class="a" style="left:2269px;top:1469px;width:7px;height:12px;background:#e05a55"></div>
<div class="a" style="left:0;top:1644px;width:2278px;height:2px;background:#2b2b2b"></div>
<div class="a" style="left:0;top:1646px;width:2278px;height:40px;background:#181818"></div>
<div class="a ui" style="left:1490.30px;top:1653.60px;font-size:25.3px;line-height:25.3px;letter-spacing:0.333px;color:#cccccc;">Ln 23, Col 11</div>
<div class="a ui" style="left:1676.20px;top:1653.60px;font-size:25.3px;line-height:25.3px;letter-spacing:-0.213px;color:#cccccc;">Spaces: 4</div>
<div class="a ui" style="left:1819.30px;top:1653.60px;font-size:25.3px;line-height:25.3px;letter-spacing:0.450px;color:#cccccc;">UTF-8</div>
<div class="a ui" style="left:1923.90px;top:1653.60px;font-size:25.3px;line-height:25.3px;letter-spacing:-1.300px;color:#cccccc;">LF</div>
<div class="a ui" style="left:2019.30px;top:1653.60px;font-size:25.3px;line-height:25.3px;letter-spacing:0.560px;color:#cccccc;">Python</div>
<div class="a ui" style="left:2128.50px;top:1653.60px;font-size:25.3px;line-height:25.3px;letter-spacing:0.725px;color:#cccccc;">3.9.6</div>
<div class="a ui" style="left:1983.80px;top:1653.60px;font-size:25.3px;line-height:25.3px;letter-spacing:-1.150px;color:#cccccc;">{ }</div>
<svg class="a" style="left:2218px;top:1648px" width="32" height="34" viewBox="0 0 32 34"><path d="M17.8 6.3C12 6.3 8.2 9.5 8.2 15C8.2 20 7.5 23 6 26.1H26.5C25 23 23.9 21 23.7 18.5" stroke="#cccccc" stroke-width="2" fill="none" stroke-linejoin="round"/><path d="M12.6 26.6A3.3 3.3 0 0 0 19.2 26.6Z" fill="#cccccc"/><circle cx="22.9" cy="10.9" r="5.2" fill="#cccccc"/></svg>
<div class="a" style="left:2276px;top:0;width:2px;height:1688px;background:#484848"></div>
<div class="a" style="left:0;top:1686px;width:2278px;height:2px;background:#484848"></div>
<div class="a" style="left:2256px;top:1666px;width:22px;height:22px;background:#2a2612"></div>
<div class="a" style="left:2256px;top:1666px;width:22px;height:22px;background:#181818;border-right:2px solid #484848;border-bottom:2px solid #484848;border-bottom-right-radius:19px"></div>
</body></html>
